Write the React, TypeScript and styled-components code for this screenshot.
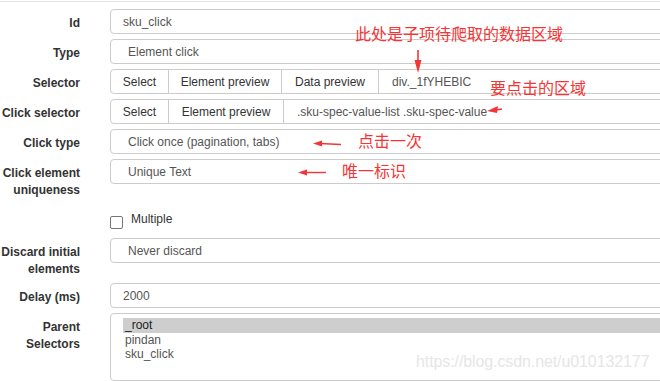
import styled, { createGlobalStyle } from 'styled-components';

const GlobalStyle = createGlobalStyle`
    html, body {
        margin: 0;
        padding: 0;
        background: #fff;
        overflow: hidden;
    }
    body {
        font-family: "Liberation Sans", Arial, sans-serif;
        font-size: 12px;
        color: #333;
    }
`;

const Page = styled.div`
    position: relative;
    width: 660px;
    height: 381px;
    overflow: hidden;
`;

const TopRule = styled.div`
    margin-top: 1px;
    height: 1px;
    background: #e3e3e3;
`;

const Form = styled.div`
    padding-top: 7px;
    width: 760px;
`;

const Row = styled.div`
    display: grid;
    grid-template-columns: 80px 1fr;
    column-gap: 30px;
    margin-bottom: 5px;
`;

const Label = styled.div`
    text-align: right;
    font-weight: bold;
    font-size: 12px;
    line-height: 17px;
    padding-top: 6px;
    color: #333;
`;

const Field = styled.div<{ $pad?: number }>`
    box-sizing: border-box;
    height: 25px;
    border: 1px solid #ccc;
    border-radius: 4px;
    padding-left: ${p => p.$pad ?? 12}px;
    display: flex;
    align-items: center;
    color: #555;
    font-size: 12px;
    white-space: nowrap;
`;

const Group = styled.div`
    box-sizing: border-box;
    height: 25px;
    border: 1px solid #ccc;
    border-radius: 4px;
    display: flex;
    align-items: stretch;
`;

const GroupButton = styled.div<{ $w: number }>`
    width: ${p => p.$w}px;
    border-right: 1px solid #ccc;
    display: flex;
    align-items: center;
    justify-content: center;
    color: #333;
    font-size: 12px;
    white-space: nowrap;
`;

const GroupInput = styled.div`
    flex: 1;
    padding-left: 13px;
    display: flex;
    align-items: center;
    color: #555;
    font-size: 12px;
    white-space: nowrap;
`;

const CheckLine = styled.div`
    display: flex;
    align-items: flex-start;
    gap: 8px;
    height: 29px;
    padding-top: 8px;
    box-sizing: border-box;
`;

const CheckBox = styled.span`
    width: 13px;
    height: 13px;
    box-sizing: border-box;
    border: 1px solid #767676;
    border-radius: 2px;
    background: #fff;
    margin-top: 4px;
`;

const CheckText = styled.span`
    font-size: 12px;
    line-height: 14px;
    color: #333;
`;

const ListBox = styled.div`
    box-sizing: border-box;
    height: 68px;
    border: 1px solid #ccc;
    border-radius: 4px;
    padding: 4px 0 0 12px;
`;

const ListOption = styled.div<{ $selected?: boolean }>`
    padding-left: 2px;
    height: 14.5px;
    line-height: 14px;
    font-size: 12px;
    color: ${p => (p.$selected ? '#222' : '#555')};
    background: ${p => (p.$selected ? '#cecece' : 'transparent')};
`;

const Note = styled.div<{ $x: number; $y: number }>`
    position: absolute;
    left: ${p => p.$x}px;
    top: ${p => p.$y}px;
    color: #f53535;
    font-family: "Noto Sans CJK SC", sans-serif;
    font-size: 16px;
    line-height: 20px;
    white-space: nowrap;
`;

const Arrow = styled.svg<{ $x: number; $y: number }>`
    position: absolute;
    left: ${p => p.$x}px;
    top: ${p => p.$y}px;
    overflow: visible;
`;

const Watermark = styled.div`
    position: absolute;
    left: 416px;
    top: 352px;
    color: #e6e6e6;
    font-size: 16px;
    line-height: 20px;
    letter-spacing: -0.1px;
    white-space: nowrap;
`;

const RED = '#f53535';

function App() {
    return (
        <Page>
            <GlobalStyle />
            <TopRule />
            <Form>
                <Row>
                    <Label>Id</Label>
                    <Field>sku_click</Field>
                </Row>
                <Row>
                    <Label>Type</Label>
                    <Field $pad={17}>Element click</Field>
                </Row>
                <Row>
                    <Label>Selector</Label>
                    <Group>
                        <GroupButton $w={57}>Select</GroupButton>
                        <GroupButton $w={112}>Element preview</GroupButton>
                        <GroupButton $w={96}>Data preview</GroupButton>
                        <GroupInput>div._1fYHEBIC</GroupInput>
                    </Group>
                </Row>
                <Row>
                    <Label>Click selector</Label>
                    <Group>
                        <GroupButton $w={57}>Select</GroupButton>
                        <GroupButton $w={114}>Element preview</GroupButton>
                        <GroupInput>.sku-spec-value-list .sku-spec-value</GroupInput>
                    </Group>
                </Row>
                <Row>
                    <Label>Click type</Label>
                    <Field $pad={17}>Click once (pagination, tabs)</Field>
                </Row>
                <Row>
                    <Label>Click element uniqueness</Label>
                    <Field $pad={17}>Unique Text</Field>
                </Row>
                <Row>
                    <div />
                    <CheckLine>
                        <CheckBox />
                        <CheckText>Multiple</CheckText>
                    </CheckLine>
                </Row>
                <Row>
                    <Label>Discard initial elements</Label>
                    <Field $pad={17}>Never discard</Field>
                </Row>
                <Row>
                    <Label>Delay (ms)</Label>
                    <Field>2000</Field>
                </Row>
                <Row>
                    <Label>Parent Selectors</Label>
                    <ListBox>
                        <ListOption $selected>_root</ListOption>
                        <ListOption>pindan</ListOption>
                        <ListOption>sku_click</ListOption>
                    </ListBox>
                </Row>
            </Form>

            <Note $x={355} $y={23}>此处是子项待爬取的数据区域</Note>
            <Arrow $x={412} $y={49} width={12} height={25}>
                <line x1="6" y1="1" x2="6" y2="13" stroke={RED} strokeWidth="1.6" />
                <polygon points="2.5,11 9.5,11 6,24" fill={RED} />
            </Arrow>

            <Note $x={490} $y={77}>要点击的区域</Note>
            <Arrow $x={486} $y={104} width={18} height={10}>
                <polygon points="1,7 12,2 11,9" fill={RED} />
                <line x1="10" y1="6" x2="16" y2="5" stroke={RED} strokeWidth="1.4" />
            </Arrow>

            <Note $x={358} $y={130}>点击一次</Note>
            <Arrow $x={312} $y={139} width={30} height={10}>
                <polygon points="1,4.5 10,1.5 10,7.5" fill={RED} />
                <line x1="8" y1="4.5" x2="29" y2="5.5" stroke={RED} strokeWidth="1.4" />
            </Arrow>

            <Note $x={342} $y={160}>唯一标识</Note>
            <Arrow $x={297} $y={168} width={30} height={10}>
                <polygon points="1,4.5 10,1.5 10,7.5" fill={RED} />
                <line x1="8" y1="4.5" x2="29" y2="4.5" stroke={RED} strokeWidth="1.4" />
            </Arrow>

            <Watermark>https://blog.csdn.net/u010132177</Watermark>
        </Page>
    );
}

export default App;
